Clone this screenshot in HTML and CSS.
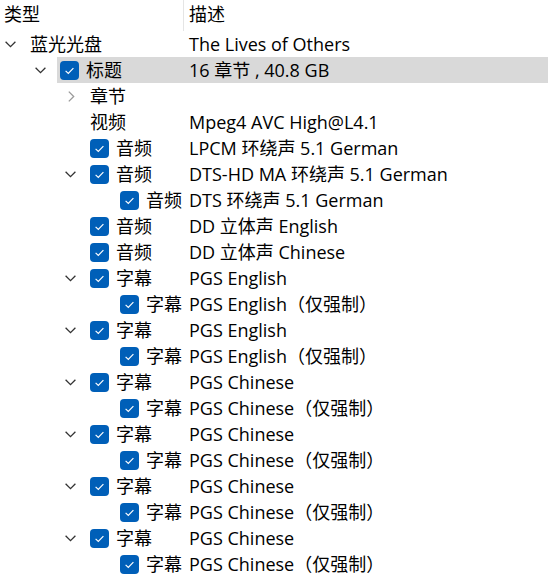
FILE: index.html
```html
<!DOCTYPE html>
<html lang="zh-CN">
<head>
    <meta charset="UTF-8">
    <meta name="viewport" content="width=device-width, initial-scale=1.0">
    <title>蓝光光盘</title>
    <link rel="stylesheet" href="styles.css">
</head>
<body>
    <div class="tree">
        <div class="header">
            <div class="col-type">类型</div>
            <div class="col-desc">描述</div>
        </div>

        <div class="row">
            <div class="type lv0">
                <span class="twisty"><svg class="chev" viewBox="0 0 11 7"><path d="M0.6 0.8 L5.5 5.7 L10.4 0.8"/></svg></span>
                <span class="label">蓝光光盘</span>
            </div>
            <div class="desc">The Lives of Others</div>
        </div>

        <div class="row selected">
            <div class="type lv1">
                <span class="twisty"><svg class="chev" viewBox="0 0 11 7"><path d="M0.6 0.8 L5.5 5.7 L10.4 0.8"/></svg></span>
                <span class="label"><span class="cb on"><svg viewBox="0 0 19 19"><path d="M5.6 9.9 L8.3 12.4 L13.4 7.2"/></svg></span>标题</span>
            </div>
            <div class="desc">16 章节 , 40.8 GB</div>
        </div>

        <div class="row">
            <div class="type lv2">
                <span class="twisty"><svg class="chev closed" viewBox="0 0 7 11"><path d="M0.8 0.6 L5.7 5.5 L0.8 10.4"/></svg></span>
                <span class="label">章节</span>
            </div>
            <div class="desc"></div>
        </div>

        <div class="row">
            <div class="type lv2">
                <span class="twisty"></span>
                <span class="label">视频</span>
            </div>
            <div class="desc">Mpeg4 AVC High@L4.1</div>
        </div>

        <div class="row">
            <div class="type lv2">
                <span class="twisty"></span>
                <span class="label"><span class="cb on"><svg viewBox="0 0 19 19"><path d="M5.6 9.9 L8.3 12.4 L13.4 7.2"/></svg></span>音频</span>
            </div>
            <div class="desc">LPCM 环绕声 5.1 German</div>
        </div>

        <div class="row">
            <div class="type lv2">
                <span class="twisty"><svg class="chev" viewBox="0 0 11 7"><path d="M0.6 0.8 L5.5 5.7 L10.4 0.8"/></svg></span>
                <span class="label"><span class="cb on"><svg viewBox="0 0 19 19"><path d="M5.6 9.9 L8.3 12.4 L13.4 7.2"/></svg></span>音频</span>
            </div>
            <div class="desc">DTS-HD MA 环绕声 5.1 German</div>
        </div>

        <div class="row">
            <div class="type lv3">
                <span class="twisty"></span>
                <span class="label"><span class="cb on"><svg viewBox="0 0 19 19"><path d="M5.6 9.9 L8.3 12.4 L13.4 7.2"/></svg></span>音频</span>
            </div>
            <div class="desc">DTS 环绕声 5.1 German</div>
        </div>

        <div class="row">
            <div class="type lv2">
                <span class="twisty"></span>
                <span class="label"><span class="cb on"><svg viewBox="0 0 19 19"><path d="M5.6 9.9 L8.3 12.4 L13.4 7.2"/></svg></span>音频</span>
            </div>
            <div class="desc">DD 立体声 English</div>
        </div>

        <div class="row">
            <div class="type lv2">
                <span class="twisty"></span>
                <span class="label"><span class="cb on"><svg viewBox="0 0 19 19"><path d="M5.6 9.9 L8.3 12.4 L13.4 7.2"/></svg></span>音频</span>
            </div>
            <div class="desc">DD 立体声 Chinese</div>
        </div>

        <!-- subtitles: each track has a forced-only child -->
        <div class="row">
            <div class="type lv2">
                <span class="twisty"><svg class="chev" viewBox="0 0 11 7"><path d="M0.6 0.8 L5.5 5.7 L10.4 0.8"/></svg></span>
                <span class="label"><span class="cb on"><svg viewBox="0 0 19 19"><path d="M5.6 9.9 L8.3 12.4 L13.4 7.2"/></svg></span>字幕</span>
            </div>
            <div class="desc">PGS English</div>
        </div>
        <div class="row">
            <div class="type lv3">
                <span class="twisty"></span>
                <span class="label"><span class="cb on"><svg viewBox="0 0 19 19"><path d="M5.6 9.9 L8.3 12.4 L13.4 7.2"/></svg></span>字幕</span>
            </div>
            <div class="desc">PGS English（仅强制）</div>
        </div>

        <div class="row">
            <div class="type lv2">
                <span class="twisty"><svg class="chev" viewBox="0 0 11 7"><path d="M0.6 0.8 L5.5 5.7 L10.4 0.8"/></svg></span>
                <span class="label"><span class="cb on"><svg viewBox="0 0 19 19"><path d="M5.6 9.9 L8.3 12.4 L13.4 7.2"/></svg></span>字幕</span>
            </div>
            <div class="desc">PGS English</div>
        </div>
        <div class="row">
            <div class="type lv3">
                <span class="twisty"></span>
                <span class="label"><span class="cb on"><svg viewBox="0 0 19 19"><path d="M5.6 9.9 L8.3 12.4 L13.4 7.2"/></svg></span>字幕</span>
            </div>
            <div class="desc">PGS English（仅强制）</div>
        </div>

        <div class="row">
            <div class="type lv2">
                <span class="twisty"><svg class="chev" viewBox="0 0 11 7"><path d="M0.6 0.8 L5.5 5.7 L10.4 0.8"/></svg></span>
                <span class="label"><span class="cb on"><svg viewBox="0 0 19 19"><path d="M5.6 9.9 L8.3 12.4 L13.4 7.2"/></svg></span>字幕</span>
            </div>
            <div class="desc">PGS Chinese</div>
        </div>
        <div class="row">
            <div class="type lv3">
                <span class="twisty"></span>
                <span class="label"><span class="cb on"><svg viewBox="0 0 19 19"><path d="M5.6 9.9 L8.3 12.4 L13.4 7.2"/></svg></span>字幕</span>
            </div>
            <div class="desc">PGS Chinese（仅强制）</div>
        </div>

        <div class="row">
            <div class="type lv2">
                <span class="twisty"><svg class="chev" viewBox="0 0 11 7"><path d="M0.6 0.8 L5.5 5.7 L10.4 0.8"/></svg></span>
                <span class="label"><span class="cb on"><svg viewBox="0 0 19 19"><path d="M5.6 9.9 L8.3 12.4 L13.4 7.2"/></svg></span>字幕</span>
            </div>
            <div class="desc">PGS Chinese</div>
        </div>
        <div class="row">
            <div class="type lv3">
                <span class="twisty"></span>
                <span class="label"><span class="cb on"><svg viewBox="0 0 19 19"><path d="M5.6 9.9 L8.3 12.4 L13.4 7.2"/></svg></span>字幕</span>
            </div>
            <div class="desc">PGS Chinese（仅强制）</div>
        </div>

        <div class="row">
            <div class="type lv2">
                <span class="twisty"><svg class="chev" viewBox="0 0 11 7"><path d="M0.6 0.8 L5.5 5.7 L10.4 0.8"/></svg></span>
                <span class="label"><span class="cb on"><svg viewBox="0 0 19 19"><path d="M5.6 9.9 L8.3 12.4 L13.4 7.2"/></svg></span>字幕</span>
            </div>
            <div class="desc">PGS Chinese</div>
        </div>
        <div class="row">
            <div class="type lv3">
                <span class="twisty"></span>
                <span class="label"><span class="cb on"><svg viewBox="0 0 19 19"><path d="M5.6 9.9 L8.3 12.4 L13.4 7.2"/></svg></span>字幕</span>
            </div>
            <div class="desc">PGS Chinese（仅强制）</div>
        </div>

        <div class="row">
            <div class="type lv2">
                <span class="twisty"><svg class="chev" viewBox="0 0 11 7"><path d="M0.6 0.8 L5.5 5.7 L10.4 0.8"/></svg></span>
                <span class="label"><span class="cb on"><svg viewBox="0 0 19 19"><path d="M5.6 9.9 L8.3 12.4 L13.4 7.2"/></svg></span>字幕</span>
            </div>
            <div class="desc">PGS Chinese</div>
        </div>
        <div class="row">
            <div class="type lv3">
                <span class="twisty"></span>
                <span class="label"><span class="cb on"><svg viewBox="0 0 19 19"><path d="M5.6 9.9 L8.3 12.4 L13.4 7.2"/></svg></span>字幕</span>
            </div>
            <div class="desc">PGS Chinese（仅强制）</div>
        </div>

        <!-- next title, only its checkbox edge shows at the bottom -->
        <div class="row">
            <div class="type lv1">
                <span class="twisty"></span>
                <span class="label"><span class="cb"></span></span>
            </div>
            <div class="desc"></div>
        </div>
    </div>
</body>
</html>
```

FILE: styles.css
```css
html, body {
    margin: 0;
    background: #fff;
}
body {
    height: 581px;
    overflow: hidden;
    font-family: "Open Sans", "Noto Sans CJK SC", sans-serif;
    font-size: 18px;
    color: #000;
}
.tree {
    display: flex;
    flex-direction: column;
}
.header {
    display: flex;
    height: 31px;
    align-items: stretch;
}
.col-type {
    width: 184px;
    padding-left: 4px;
    box-sizing: border-box;
    line-height: 29px;
    border-right: 1px solid #e5e5e5;
}
.col-desc {
    padding-left: 5px;
    line-height: 29px;
}
.row {
    display: grid;
    grid-template-columns: 189px 1fr;
    height: 26px;
    line-height: 26px;
    white-space: nowrap;
}
.type {
    display: flex;
    align-items: center;
    min-width: 0;
}
.lv0 { padding-left: 0; }
.lv1 { padding-left: 30px; }
.lv2 { padding-left: 60px; }
.lv3 { padding-left: 90px; }
.twisty {
    flex: 0 0 27px;
    display: flex;
    align-items: center;
    height: 26px;
}
.chev {
    width: 11px;
    height: 7px;
    margin-left: 5px;
    fill: none;
    stroke: #333;
    stroke-width: 1.3;
}
.chev.closed {
    width: 7px;
    height: 11px;
    margin-left: 8px;
    stroke: #9a9a9a;
}
.label {
    flex: 1;
    display: flex;
    align-items: center;
    height: 26px;
    padding-left: 3px;
}
.cb {
    flex: 0 0 19px;
    width: 19px;
    height: 19px;
    margin-right: 7px;
    box-sizing: border-box;
    border: 1px solid #6e6e6e;
    border-radius: 4px;
    background: #fff;
}
.cb.on {
    border: none;
    background: #005fb8;
}
.cb svg {
    display: block;
    width: 19px;
    height: 19px;
    fill: none;
    stroke: #fff;
    stroke-width: 1.2;
}
.desc {
    height: 26px;
}
.selected .label,
.selected .desc {
    background: #d9d9d9;
}
```
